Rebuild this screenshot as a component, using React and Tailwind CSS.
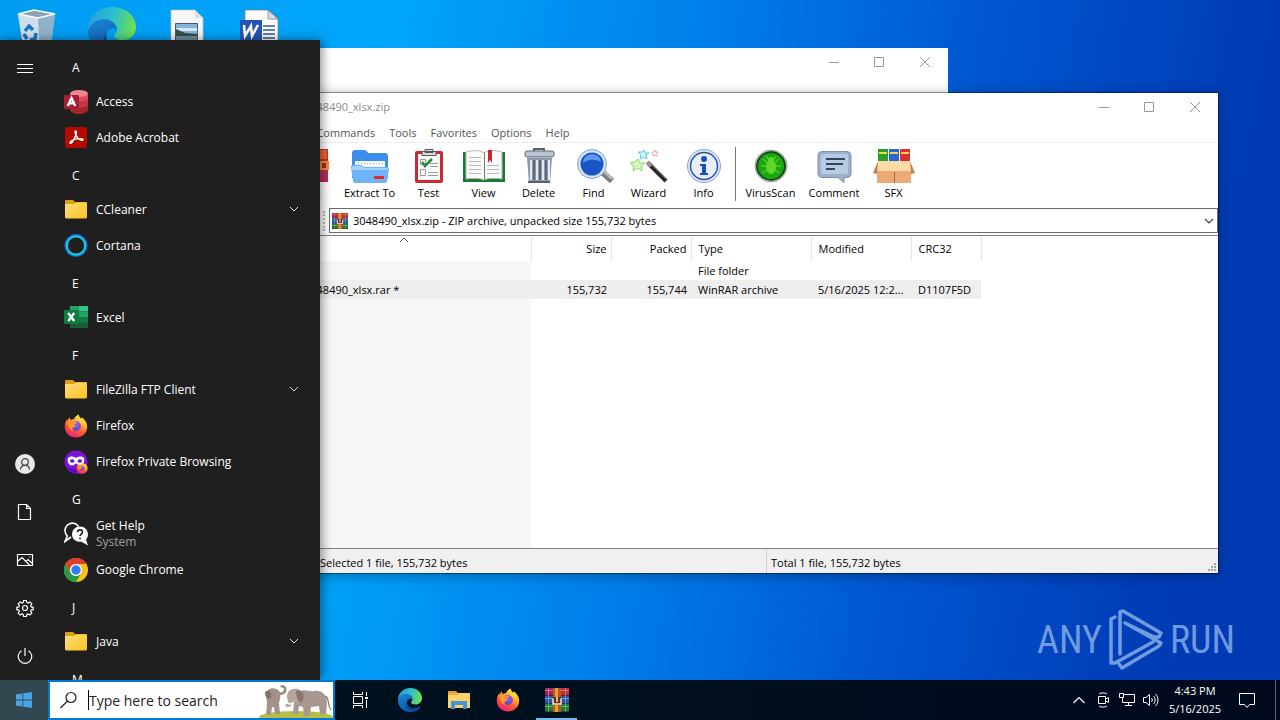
import { useId } from 'react'

const startRows = [
  { header: 'A' },
  { label: 'Access', icon: 'access' },
  { label: 'Adobe Acrobat', icon: 'acrobat' },
  { header: 'C' },
  { label: 'CCleaner', icon: 'folder', expandable: true },
  { label: 'Cortana', icon: 'cortana' },
  { header: 'E' },
  { label: 'Excel', icon: 'excel' },
  { header: 'F' },
  { label: 'FileZilla FTP Client', icon: 'folder', expandable: true },
  { label: 'Firefox', icon: 'firefox' },
  { label: 'Firefox Private Browsing', icon: 'private' },
  { header: 'G' },
  { label: 'Get Help', icon: 'help', note: 'System' },
  { label: 'Google Chrome', icon: 'chrome' },
  { header: 'J' },
  { label: 'Java', icon: 'folder', expandable: true },
  { header: 'M' },
]

const FirefoxIcon = ({ className }) => {
  const id = useId()
  return (
    <svg className={className} viewBox="0 0 24 24" aria-hidden="true">
      <defs>
        <linearGradient id={`${id}a`} x1="0.8" y1="0" x2="0.3" y2="1">
          <stop offset="0" stopColor="#fff44f" />
          <stop offset="0.35" stopColor="#ffb02e" />
          <stop offset="0.65" stopColor="#ff5634" />
          <stop offset="1" stopColor="#e8207c" />
        </linearGradient>
        <radialGradient id={`${id}b`} cx="0.6" cy="0.3" r="0.8">
          <stop offset="0" stopColor="#a55cf0" />
          <stop offset="1" stopColor="#4d3fc4" />
        </radialGradient>
      </defs>
      <path
        fill={`url(#${id}a)`}
        d="M14.6 .4c.2 2.2 1.3 3.3 2.6 4.4.5-.4.5-1 .4-1.6 3 2 5.6 5.400 5.600 9.600C23.200 19 18.200 23.600 12 23.600S.8 19 .8 12.800c0-3 .8-5.200 2-7.300l.5 1.600c.5-1.700 1.500-3 2.600-3.900-.1 1.200.2 2 .8 2.700 1-.5 2.300-.7 3.300-.5C10.400 3.200 12.200 1.500 14.600.4Z"
      />
      <circle cx="11.800" cy="12" r="5" fill={`url(#${id}b)`} />
      <path fill="#ff9a2a" d="M3.600 8.200c2.700-2.300 5-2 6.800-.6l2.700.3c-.1 1.400-2.300 1.600-3 2.600.5.900 1.400 1 2.300 1.500-1.400 1-2.900.7-3.600 1.700-.6 1-.2 2.400.7 3.200-3.500-.7-6-4.500-5.900-8.700Z" />
      <path fill="#ffd43a" d="M14.600.4c.2 2.200 1.300 3.300 2.600 4.400 2.500 2 3.300 5 2.500 8.200-.5-2.300-1.500-3.900-3.700-5C13.400 6.700 12.600 3 14.600.4Z" />
    </svg>
  )
}

const EdgeIcon = ({ className }) => {
  const id = useId()
  return (
    <svg className={className} viewBox="0 0 48 48" aria-hidden="true">
      <defs>
        <linearGradient id={`${id}a`} x1="0" y1="0.3" x2="1" y2="0.5">
          <stop offset="0" stopColor="#2a9fd8" />
          <stop offset="0.5" stopColor="#2cc0ce" />
          <stop offset="1" stopColor="#6fe04a" />
        </linearGradient>
        <linearGradient id={`${id}b`} x1="0" y1="0" x2="0.5" y2="1">
          <stop offset="0" stopColor="#1b86d4" />
          <stop offset="1" stopColor="#0b57b0" />
        </linearGradient>
      </defs>
      <path fill={`url(#${id}b)`} d="M0 24C2 15 9 12 16 12c8 0 13 6 13 11-3-3-8-2-10 2-3 7 2 15 11 16 5 .5 9-1 12-3 2-1 3 0 2 2-4 5-11 8-20 8C10 48 0 38 0 24Z" />
      <path fill={`url(#${id}a)`} d="M0 24C0 10 11 0 24 0c14 0 24 9 24 20 0 8-6 13-13 13-6 0-9-2-9-4s3-3 3-7c0-5-6-10-13-10C8 12 2 17 0 24Z" />
      <path fill="#094a9c" d="M19 25c-3 7 2 15 11 16 5 .5 9-1 12-3 2-1 3 0 2 2-4 5-10 7-18 6-10-1-13-14-7-21Z" />
    </svg>
  )
}

const WinRarIcon = ({ className }) => (
  <svg className={className} viewBox="0 0 24 24" aria-hidden="true">
    <path fill="#a3205f" d="M0 0h12v8H0z" />
    <path fill="#c22a3e" d="M12 0h12v8H12z" />
    <path fill="#2458b8" d="M0 8h24v8H0z" />
    <path fill="#14803c" d="M0 16h24v8H0z" />
    <path fill="#dd6a94" d="M0 2h24v1H0z" />
    <path fill="#6c9fe6" d="M0 10h24v1H0z" />
    <path fill="#52bd70" d="M0 18h24v1H0z" />
    <path fill="#2b1b3a" d="M0 7h24v1H0zM0 15h24v1H0zM0 23h24v1H0z" opacity=".7" />
    <path fill="#d8b04a" d="M3 0h1v24H3zM20 0h1v24h-1z" opacity=".6" />
    <path fill="#b85c14" d="M8 0h8v24H8z" />
    <path fill="#ee9a3c" d="M10 0h3v24h-3z" />
    <path fill="#6b2c14" d="M8 9h8v8H8z" />
    <path fill="none" stroke="#f6e6cc" strokeWidth="1.500" d="M8 10.500v5.500h8v-5.500M12 9v5" />
  </svg>
)

const FolderIcon = ({ className }) => {
  const id = useId()
  return (
    <svg className={className} viewBox="0 0 24 24" aria-hidden="true">
      <linearGradient id={id} x1="0" y1="0" x2="1" y2="1">
        <stop offset="0" stopColor="#ffe07a" />
        <stop offset="1" stopColor="#fcbf22" />
      </linearGradient>
      <path fill="#dfa010" d="M1 3a1 1 0 0 1 1-1h7l2 2h11a1 1 0 0 1 1 1v4H1Z" />
      <path fill={`url(#${id})`} d="M1 6h9l2-1.500h10a1 1 0 0 1 1 1V19a1.500 1.500 0 0 1-1.500 1.500h-19A1.500 1.500 0 0 1 1 19Z" />
    </svg>
  )
}

function AppIcon({ name }) {
  const className = 'h-6 w-6 shrink-0'

  if (name === 'folder') return <FolderIcon className={className} />
  if (name === 'firefox') return <FirefoxIcon className={className} />

  if (name === 'private') {
    return (
      <div className="relative h-6 w-6 shrink-0">
        <svg className="h-6 w-6" viewBox="0 0 24 24" aria-hidden="true">
          <circle cx="12" cy="12" r="11.500" fill="#7a12d8" />
          <path fill="#5a0cc0" d="M12 23.500A11.500 11.500 0 0 1 2 17c4 2 10 3 14 0Z" />
          <path fill="#fff" d="M4 8c1.500-2 5.500-2 8 0 2.500-2 6.500-2 8 0 1 4-1 7.500-4 7.500-2.500 0-3-2-4-2s-1.500 2-4 2C5 15.500 3 12 4 8Z" />
          <ellipse cx="8.200" cy="11" rx="2.300" ry="1.700" fill="#6a10cc" />
          <ellipse cx="15.800" cy="11" rx="2.300" ry="1.700" fill="#6a10cc" />
        </svg>
        <FirefoxIcon className="absolute right-0 bottom-0 h-3 w-3" />
      </div>
    )
  }

  return (
    <svg className={className} viewBox="0 0 24 24" aria-hidden="true">
      {name === 'access' && (
        <>
          <path fill="#a4262c" d="M6 3v17c0 2 4 4 9 4s9-2 9-4V3Z" />
          <path fill="#c8354a" d="M6 3v11c0 2 4 3.500 9 3.500s9-1.500 9-3.500V3Z" />
          <path fill="#dd4a5e" d="M6 3v5c0 2 4 3.500 9 3.500S24 10 24 8V3Z" />
          <ellipse cx="15" cy="3.500" rx="9" ry="3.500" fill="#ef8593" />
          <rect y="5" width="15" height="14" rx="1" fill="#a51d36" />
          <path fill="none" stroke="#fff" strokeWidth="2.300" d="M3.700 16 7.500 8 11.300 16M5.200 13.300h4.600" />
        </>
      )}
      {name === 'acrobat' && (
        <>
          <rect x="1" y="1" width="22" height="21" rx="3" fill="#b30b00" />
          <path fill="none" stroke="#fff" strokeWidth="1.400" d="M11.500 5c-1.400 1 1.700 9 6.300 9.300 2.200.1 1.700-1.800-1.300-1.700-3.600.1-8.500 1.400-10.200 3.300-1 1.300.5 2.100 1.800.4 2.200-2.900 4.700-8.500 4.300-10.600-.1-.7-.6-.9-.9-.7Z" />
        </>
      )}
      {name === 'cortana' && (
        <>
          <circle cx="12" cy="11.500" r="10.500" fill="none" stroke="#0a6fc2" strokeWidth="2" />
          <circle cx="12" cy="11.500" r="9.200" fill="none" stroke="#22bfe8" strokeWidth="2.200" />
        </>
      )}
      {name === 'excel' && (
        <>
          <path fill="#21a366" d="M6 0h9v5.500H6z" />
          <path fill="#33c481" d="M15 0h9v5.500h-9z" />
          <path fill="#107c41" d="M6 5.500h9V11H6z" />
          <path fill="#21a366" d="M15 5.500h9V11h-9z" />
          <path fill="#185c37" d="M6 11h18v11H6z" />
          <path fill="#107c41" d="M15 11h9v5.500h-9z" />
          <rect y="4" width="15" height="14" rx="1" fill="#107c41" />
          <path fill="none" stroke="#fff" strokeWidth="2.300" d="m4.200 7 6 8M10.200 7l-6 8" />
        </>
      )}
      {name === 'help' && (
        <>
          <path fill="none" stroke="#fff" strokeWidth="1.600" d="M7 15 1 19.500 3.300 14C.4 11 .2 6.500 3 3.500 6.500 0 12 .5 14.500 4.500" />
          <path fill="#fff" d="M16 4.500c4.400 0 8 3.400 8 7.700 0 2.300-.8 4-2 5.300l2 6-6.500-3.800C12 20.300 8 17 8 12.200c0-4.300 3.600-7.700 8-7.700Z" />
          <path fill="none" stroke="#1f1f1f" strokeWidth="1.600" d="M13.500 10.300c.2-3.300 5-3 5-.2 0 1.900-2.500 2-2.500 4M16 15.500v1.800" />
        </>
      )}
      {name === 'chrome' && (
        <>
          <circle cx="12" cy="12" r="12" fill="#fbc116" />
          <path fill="#e33b2e" d="M1.600 6A12 12 0 0 1 22.400 6H12a6 6 0 0 0-5.200 9Z" />
          <path fill="#229a48" d="M1.600 6A12 12 0 0 0 12 24l5.200-9a6 6 0 0 1-10.400 0Z" />
          <circle cx="12" cy="12" r="6" fill="#fff" />
          <circle cx="12" cy="12" r="4.700" fill="#2f7df0" />
        </>
      )}
    </svg>
  )
}

// Thin line icons of the left rail
const railIcons = [
  {
    label: 'Account',
    drawing: (
      <>
        <circle cx="10" cy="10" r="10" fill="#e8e8e8" stroke="none" />
        <g stroke="#444">
          <circle cx="10" cy="8" r="3.300" />
          <path d="M5.500 15.500c0-5.500 9-5.500 9 0" />
        </g>
      </>
    ),
  },
  { label: 'Documents', drawing: <path d="M3.500 2.500h8l4 4v11h-12zM11.500 2.500v4h4" /> },
  { label: 'Pictures', drawing: <path d="M2.500 4.500h15v11h-15zM2.500 11.500l4.500-4 8 8M11 11.500l2-2 4.500 4M14 7h1" /> },
  {
    label: 'Settings',
    drawing: (
      <>
        <circle cx="10" cy="10" r="2.500" />
        <path d="m8.600 2.500-.4 2-1.300.5-1.700-1.100-2 2 1.100 1.700-.5 1.300-2 .4v2.400l2 .4.5 1.300-1.100 1.700 2 2 1.700-1.100 1.300.5.4 2h2.800l.4-2 1.300-.5 1.700 1.100 2-2-1.100-1.700.5-1.300 2-.4V9.300l-2-.4-.5-1.300 1.100-1.700-2-2-1.700 1.100-1.300-.5-.4-2Z" />
      </>
    ),
  },
  { label: 'Power', drawing: <path d="M10 2v8M6.500 4.700a6.800 6.800 0 1 0 7 0" /> },
]

function StartMenu() {
  return (
    <nav aria-label="Start" className="absolute top-10 bottom-0 left-0 z-20 flex w-80 overflow-hidden bg-[#1f1f1f] text-white shadow-[2px_0_10px_rgba(0,0,0,0.45)]">
      <div className="flex w-12 shrink-0 flex-col pt-1">
        <button aria-label="Expand" className="flex h-12 items-center justify-center pl-0.5">
          <svg className="h-4 w-4" viewBox="0 0 16 16" stroke="#fff">
            <path d="M0 4.500h16M0 8.500h16M0 12.500h16" />
          </svg>
        </button>
        <div className="mt-auto flex flex-col">
          {railIcons.map(({ label, drawing }) => (
            <button aria-label={label} className="flex h-12 items-center justify-center pl-0.5" key={label}>
              <svg className="h-5 w-5" viewBox="0 0 20 20" fill="none" stroke="#fff" strokeWidth="1.200">
                {drawing}
              </svg>
            </button>
          ))}
        </div>
      </div>

      <ul className="flex-1 overflow-hidden pt-2">
        {startRows.map((row) =>
          row.header ? (
            <li className="h-9 pt-1 pl-6 text-[12px] leading-8" key={row.header}>
              {row.header}
            </li>
          ) : (
            <li key={row.label}>
              <button className="flex h-9 w-full items-center gap-2 pr-5 pl-4 text-left">
                <AppIcon name={row.icon} />
                <span className="flex flex-1 flex-col text-[12px] leading-4">
                  {row.label}
                  {row.note ? <span className="text-[#a0a0a0]">{row.note}</span> : null}
                </span>
                {row.expandable ? (
                  <svg className="h-3 w-3" viewBox="0 0 12 12" fill="none" stroke="#ddd">
                    <path d="m2 3 4 4 4-4" />
                  </svg>
                ) : null}
              </button>
            </li>
          ),
        )}
      </ul>
    </nav>
  )
}

const WindowControls = () => (
  <div className="flex">
    <button aria-label="Minimize" className="flex h-7 w-[45px] items-center justify-center">
      <svg className="h-3 w-3" viewBox="0 0 12 12" stroke="#999"><path d="M1 6.500h10" /></svg>
    </button>
    <button aria-label="Maximize" className="flex h-7 w-[45px] items-center justify-center">
      <svg className="h-3 w-3" viewBox="0 0 12 12" fill="none" stroke="#999"><path d="M1.500 1.500h9v9h-9z" /></svg>
    </button>
    <button aria-label="Close" className="flex h-7 w-[47px] items-center justify-center">
      <svg className="h-3 w-3" viewBox="0 0 12 12" stroke="#999"><path d="m1 1 10 10M11 1 1 11" /></svg>
    </button>
  </div>
)

// Toolbar drawings share a 44x38 box
const tools = [
  {
    label: 'Add',
    width: 'w-[55px]',
    drawing: (
      <>
        <path fill="#c7331d" d="M4 2h35v33H4z" />
        <path fill="#f0633a" d="M27 3h11v9H27z" />
        <path fill="#b92c5e" d="M4 24h35v11H4z" />
        <path fill="#f08b4a" d="M30 14h10v9H30z" />
        <path fill="#a82c12" d="M33 16h4v5h-4z" />
      </>
    ),
  },
  {
    label: 'Extract To',
    width: 'w-[63px]',
    drawing: (
      <>
        <path fill="#3c8ee8" d="M4 7c0-3 1-4 3-4h9c2 0 3 1 4 3h17c2 0 3 1 3 3v22H4Z" />
        <path fill="#f5f9ff" d="M7 14h30v8H7z" />
        <path stroke="#8aa9c8" strokeDasharray="1 2" d="M10 16.500h25" />
        <path fill="#6db3f8" d="M3 20c0-1 1-2 2-2h8l3 2h23c1 0 2 1 2 2l-2 12c0 1-1 2-2 2H7c-1 0-2-1-2-2Z" />
        <path fill="#a5d2fc" d="M4 20c0-1 1-1 2-1h7l3 2h23c1 0 1 1 1 2H4Z" />
        <path fill="#e02c22" d="M26 29h10v3H26z" />
      </>
    ),
  },
  {
    label: 'Test',
    width: 'w-[55px]',
    drawing: (
      <>
        <rect x="8" y="4" width="28" height="32" rx="2" fill="#c62b33" />
        <path fill="#fafafa" d="M11 7h22v26H11z" />
        <path fill="#d8dde0" stroke="#555" d="M15 4.500h14v4H15zM18 2.500h8v3h-8z" />
        <path fill="none" stroke="#999" d="M13.500 12.500h5v5h-5zM13.500 22.500h5v6h-5zM23 16.500h8M23 19.500h8M21 25.500h10M21 28.500h10" />
        <path fill="none" stroke="#248a35" strokeWidth="2.500" d="m15 15 3 4 7-7" />
      </>
    ),
  },
  {
    label: 'View',
    width: 'w-[55px]',
    drawing: (
      <>
        <path fill="#187a33" d="M1 5h42v30H1z" />
        <path fill="#fafafa" stroke="#b7b7b7" d="M4 5c7-2 14-2 18 1 4-3 11-3 18-1v27c-7-1-14-1-18 1-4-2-11-2-18-1Z" />
        <path stroke="#777" d="M22.500 6v27" />
        <path stroke="#b5b9b5" d="M7 10.500h12M7 14.500h12M7 18.500h12M7 22.500h12M7 26.500h12M25 18.500h12M25 22.500h12M25 26.500h12" />
        <path fill="#c9242b" d="M26 3h4v13l-2-3-2 3z" />
      </>
    ),
  },
  {
    label: 'Delete',
    width: 'w-[55px]',
    drawing: (
      <>
        <path fill="none" stroke="#59616c" strokeWidth="2" d="M17 4V2h10v2" />
        <path fill="#8e9bac" d="M10 11h25l-2 25H12z" />
        <path stroke="#e3eaf2" strokeWidth="2" d="M14 13v20M20 13v20M26 13v20M32 13v20" />
        <path stroke="#5d6979" strokeWidth="2" d="M17 13v20M23 13v20M29 13v20" />
        <rect x="8" y="4" width="29" height="6" rx="2" fill="#b8c4d0" stroke="#5c6673" />
        <path stroke="#59616c" strokeWidth="2" d="M11 35h22" />
      </>
    ),
  },
  {
    label: 'Find',
    width: 'w-[55px]',
    drawing: (
      <>
        <path stroke="#777b82" strokeWidth="6" d="m30 25 10 9" />
        <path stroke="#c2c6cc" strokeWidth="2" d="m31 24 9 8" />
        <circle cx="20" cy="17" r="14.500" fill="#d5e2f2" stroke="#8aa3c5" />
        <circle cx="20" cy="17" r="11.500" fill="#1955c4" />
        <path fill="#5f99ef" d="M11 16c0-11 17-12 18-1-5-3-13-3-18 1Z" />
      </>
    ),
  },
  {
    label: 'Wizard',
    width: 'w-[55px]',
    drawing: (
      <>
        <path stroke="#262626" strokeWidth="4" d="m21 16 18 18" />
        <path stroke="#999" strokeWidth="4" d="m20 15 4 4" />
        <path stroke="#777" d="m22 15 17 17" />
        <path fill="#d4f8c0" stroke="#8ad966" d="m11 12 2 4 5 0-4 3 1 5-4-3-5 3 1-5-4-3 5-1Z" />
        <path fill="#d5f5fc" stroke="#62c9e6" d="m17 3 1 3 4 0-3 2 1 4-3-2-4 2 1-4-3-3 4 0Z" />
        <path fill="#fff" stroke="#f08a80" strokeWidth=".8" d="m28 3 1 2 2 0-1 2 0 2-2-1-2 1 0-2-1-2 2 0Z" />
      </>
    ),
  },
  {
    label: 'Info',
    width: 'w-[55px]',
    drawing: (
      <>
        <circle cx="22" cy="19" r="16.500" fill="#dce6f2" stroke="#93a6c4" />
        <circle cx="22" cy="19" r="13.500" fill="#e9eff8" stroke="#2b54b8" strokeWidth="1.500" />
        <circle cx="22" cy="12" r="3" fill="#1b4fc0" />
        <path fill="#1b4fc0" d="M18 17h6v9h2v2h-8v-2h2v-7h-2z" />
      </>
    ),
    divider: true,
  },
  {
    label: 'VirusScan',
    width: 'w-[63px]',
    drawing: (
      <>
        <circle cx="22" cy="19" r="16" fill="#e4e8e4" stroke="#999" />
        <circle cx="22" cy="19" r="14" fill="#19a812" stroke="#174a18" strokeWidth="2" />
        <path stroke="#6fe03a" d="m14 12 16 14M30 12 14 26M12 19h20M17 9l3 4M27 9l-3 4" />
        <ellipse cx="22" cy="20" rx="5" ry="7" fill="#5fd628" />
        <circle cx="22" cy="13" r="3" fill="#5fd628" />
      </>
    ),
  },
  {
    label: 'Comment',
    width: 'w-16',
    drawing: (
      <>
        <path fill="#9db1ca" stroke="#7d91ad" d="M10 4.500h25a4 4 0 0 1 4 4v18a4 4 0 0 1-4 4h-3v5l-6-5H10a4 4 0 0 1-4-4v-18a4 4 0 0 1 4-4Z" />
        <rect x="9" y="7" width="27" height="20" rx="2" fill="#b9cbe2" />
        <path stroke="#35455e" strokeWidth="2" d="M14 12h19M14 17h17M14 22h9" />
      </>
    ),
  },
  {
    label: 'SFX',
    width: 'w-[55px]',
    drawing: (
      <>
        <path fill="#27a02c" d="M6 2h10v14H6z" />
        <path fill="#2668d0" d="M17 2h10v14H17z" />
        <path fill="#dc2f2f" d="M28 2h10v14H28z" />
        <path stroke="#f2d64a" strokeWidth="2" d="M7 6h8M18 6h8M29 6h8" />
        <path fill="#edaa78" d="M5 19h34v17H5z" />
        <path fill="#fbdca4" d="M6 14h32l2 10H4z" />
        <path fill="#c78154" d="m6 14-5 12 4 1zM38 14l5 12-4 1z" />
        <path stroke="#a86840" d="M22.500 25v11" />
      </>
    ),
  },
]

const columns = [
  { label: 'Name', width: 'w-[253px]', sorted: true },
  { label: 'Size', width: 'w-20', right: true },
  { label: 'Packed', width: 'w-20', right: true },
  { label: 'Type', width: 'w-[120px]' },
  { label: 'Modified', width: 'w-[100px]' },
  { label: 'CRC32', width: 'w-[70px]' },
]

const rows = [
  { cells: ['..', '', '', 'File folder', '', ''] },
  { cells: ['3048490_xlsx.rar *', '155,732', '155,744', 'WinRAR archive', '5/16/2025 12:2...', 'D1107F5D'], selected: true },
]

function FileTable() {
  return (
    <table className="h-full w-[703px] table-fixed border-collapse text-left">
      <thead>
        <tr className="h-[25px]">
          {columns.map(({ label, width, right, sorted }) => (
            <th className={`relative border-r border-[#e5e5e5] pl-[7px] font-normal ${width} ${right ? 'pr-1 text-right' : ''}`} key={label}>
              {label}
              {sorted ? (
                <svg className="absolute top-0 right-[123px] h-2 w-2" viewBox="0 0 8 8" fill="none" stroke="#555">
                  <path d="m0 6 4-4 4 4" />
                </svg>
              ) : null}
            </th>
          ))}
        </tr>
      </thead>
      <tbody>
        {rows.map(({ cells, selected }) => (
          <tr className={`h-[19px] ${selected ? 'bg-[#eeeeee]' : ''}`} key={cells[0]}>
            {cells.map((cell, i) => (
              <td
                className={`py-0 pr-1 whitespace-nowrap ${i === 0 ? 'pl-[26px]' : 'pl-[7px]'} ${i === 0 && !selected ? 'bg-[#f7f7f7]' : ''} ${columns[i].right ? 'text-right' : ''}`}
                key={columns[i].label}
              >
                {cell}
              </td>
            ))}
          </tr>
        ))}
        <tr>
          <td className="bg-[#f7f7f7]" />
          <td colSpan={5} />
        </tr>
      </tbody>
    </table>
  )
}

function ArchiveWindow() {
  return (
    <section
      aria-label="3048490_xlsx.zip"
      className="absolute top-[92px] left-[277px] z-10 flex h-[482px] w-[942px] flex-col border border-black/40 bg-white bg-clip-padding text-[11px] leading-4 shadow-[0_2px_12px_rgba(0,0,0,0.3)]"
    >
      <header className="flex h-[30px] items-start justify-between text-[#8c8c8c]">
        <div className="flex items-center gap-1.5 pt-1.5 pl-1">
          <WinRarIcon className="h-4 w-4" />
          3048490_xlsx.zip
        </div>
        <WindowControls />
      </header>
      <div className="flex h-5 items-center border-b border-[#eeeeee] text-[#555]">
        {['File', 'Commands', 'Tools', 'Favorites', 'Options', 'Help'].map((item) => (
          <button className="px-[7px]" key={item}>
            {item}
          </button>
        ))}
      </div>

      <div className="flex h-[62px] items-center pl-[5px]">
        {tools.map(({ label, width, drawing, divider }) => (
          <div className="flex items-center" key={label}>
            <button className={`flex flex-col items-center whitespace-nowrap ${width}`}>
              <svg className="h-[38px] w-11" viewBox="0 0 44 38">
                {drawing}
              </svg>
              {label}
            </button>
            {divider ? <span className="mr-[3px] ml-1 h-[54px] w-px bg-[#777]" /> : null}
          </div>
        ))}
      </div>

      <div className="mt-[3px] flex h-[25px]">
        <div className="flex w-[51px] items-center justify-end pr-1">
          <span className="h-5 border-l-2 border-dotted border-[#bbb]" />
        </div>
        <label className="flex flex-1 items-center gap-[5px] border border-[#6b6b6b] pr-0.5 pl-0.5">
          <WinRarIcon className="h-4 w-4" />
          <select aria-label="Path" className="h-full flex-1 appearance-none outline-none">
            <option>3048490_xlsx.zip - ZIP archive, unpacked size 155,732 bytes</option>
          </select>
          <svg className="h-3 w-3" viewBox="0 0 12 12" fill="none" stroke="#444" strokeWidth="1.200">
            <path d="m2 4 4 4 4-4" />
          </svg>
        </label>
      </div>

      <div className="mt-0.5 min-h-0 flex-1 border-t border-b border-[#828282]">
        <FileTable />
      </div>

      <footer className="flex h-6 items-center bg-[#f0f0f0]">
        <div className="h-full flex-1 border-r border-[#cfcfcf] pt-1.5 pl-[42px]">Selected 1 file, 155,732 bytes</div>
        <div className="flex h-full w-[451px] items-end justify-between pl-1">
          <span className="h-full pt-1.5">Total 1 file, 155,732 bytes</span>
          <svg className="h-3 w-3" viewBox="0 0 12 12" fill="#a0a0a0">
            <path d="M8 2h2v2H8zM8 5h2v2H8zM8 8h2v2H8zM5 5h2v2H5zM5 8h2v2H5zM2 8h2v2H2z" />
          </svg>
        </div>
      </footer>
    </section>
  )
}

function DesktopIcons() {
  return (
    <div className="flex gap-px pt-[7px]">
      <div className="flex w-[74px] justify-center">
        <svg className="h-12 w-12" viewBox="0 0 48 48" aria-label="Recycle Bin">
          <path fill="#b4cfe0" d="m5 7 16-4 21 4-5 38H11Z" />
          <path fill="#cfe0ec" d="m5 7 20 4 2 36-16-3Z" />
          <path fill="#8fb2cb" d="m25 11 17-4-5 37-10 3Z" />
          <path fill="#8aa4b5" stroke="#f8fbfd" strokeWidth="1.500" d="m5 7 16-4 21 4-17 4Z" />
          <path fill="none" stroke="#1678c8" strokeWidth="3.500" d="m12 24 4-5 4 4M23 26l-1 6-5 1M14 32l-3-5" />
        </svg>
      </div>
      <div className="flex w-[74px] justify-center">
        <EdgeIcon className="h-12 w-12" />
      </div>
      <div className="flex w-[74px] justify-center">
        <svg className="h-12 w-12" viewBox="0 0 48 48" aria-label="Picture file">
          <path fill="#f6f6f6" stroke="#b8c2ca" strokeWidth=".7" d="M8 3h24l8 8v36H8Z" />
          <path fill="#d9e0e5" d="M32 3v8h8Z" />
          <path fill="#80b5dc" stroke="#555" d="M12.500 16.500h22v17h-22z" />
          <path fill="#d8eaf5" d="M13 21h21v3H13z" />
          <path fill="#335248" d="m13 22 9 4 12 1v2H13z" />
          <path fill="#6c8fa4" d="M13 29h21v4H13z" />
        </svg>
      </div>
      <div className="flex w-[74px] justify-center">
        <svg className="h-12 w-12" viewBox="0 0 48 48" aria-label="Word document">
          <path fill="#fdfdfd" stroke="#7b7b7b" strokeWidth=".7" d="M7 3h23l10 9v35H7Z" />
          <path fill="#ddd" stroke="#777" strokeWidth=".7" d="M30 3v9h10Z" />
          <path stroke="#2b579a" strokeWidth="1.500" d="M25 19h12M25 23h12M25 27h12M25 31h12" />
          <path fill="#2455b4" d="M2 13h22v22H2z" />
          <path fill="none" stroke="#fff" strokeWidth="2.500" d="m6 18 1 11 6-10 1 10 6-11" />
        </svg>
      </div>
    </div>
  )
}

function Watermark() {
  return (
    <div className="absolute right-[45px] bottom-2 flex items-center gap-1.5 font-['Liberation_Sans_Narrow','Roboto_Condensed','Roboto',sans-serif] text-[38px] leading-none text-[#8db4ea]/80">
      ANY
      <svg className="h-16 w-14" viewBox="0 0 56 64" fill="none" stroke="#8db4ea" strokeWidth="3.500" strokeLinejoin="round" strokeLinecap="round" strokeOpacity=".8">
        <path d="M12 46V4l3-1 38 22-2 4h-5L17 15M7 9 3 11v44h4l38-21M17 15l36 20-2 3-37 22-3-4" />
      </svg>
      RUN
    </div>
  )
}

const Elephants = () => (
  <svg className="h-[34px] w-[74px] self-end" viewBox="0 0 74 34" aria-hidden="true">
    <ellipse cx="37" cy="33" rx="37" ry="6" fill="#b8bd45" />
    <path fill="none" stroke="#9a8880" strokeWidth="2.500" d="M18 9c6 2 9-1 8-5-1-2-3-2-4-1" />
    <path fill="#a3918a" d="M7 10c1-5 6-7 10-5 4 1 5 5 4 10l-1 4 1 11h-5l-1-7h-2l-1 8H7l1-12Z" />
    <path fill="#857069" d="M6 8c4-3 7 0 6 5-2 4-6 1-6-5Z" />
    <path fill="#a8978f" d="M40 8c5-4 10 0 15-1 8-1 13 4 13 11l-1 12h-6l-1-8-8 1-1 9h-6l-1-9-4-1-1 8h-5l1-12Z" />
    <path fill="#b7a69d" d="M28 12c0-6 6-8 11-7 5 2 6 7 4 11-3 5-8 4-9 1-1 4-3 7-6 6-3-2-1-4 0-3 2-1 0-4 0-8Z" />
    <path fill="#8a766e" d="M37 7c6-2 9 3 7 9-2 5-7 1-7-9Z" />
    <path fill="none" stroke="#8a766e" strokeWidth="1.200" d="M67 12c4 4 1 9 5 14" />
    <path fill="none" stroke="#fff" strokeWidth="1.500" d="M28 18c2 3 4 2 5 1" />
  </svg>
)

function Taskbar() {
  return (
    <footer className="relative z-30 flex h-10 shrink-0 items-stretch bg-linear-to-r from-[#021520] to-[#00091c] text-white">
      <button aria-label="Start" className="flex w-12 items-center justify-center bg-[#334750]">
        <svg className="h-4 w-4" viewBox="0 0 16 16" fill="#4aa3e6">
          <path d="M0 2.300 6.500 1.400v6.200H0zM7.300 1.300 16 0v7.600H7.300zM0 8.400h6.500v6.200L0 13.700zM7.300 8.400H16V16l-8.700-1.300z" />
        </svg>
      </button>
      <div className="flex w-[287px] items-center border-2 border-[#0078d7] bg-white pl-2.5 text-black">
        <svg className="h-[18px] w-[18px]" viewBox="0 0 18 18" fill="none" stroke="#222" strokeWidth="1.200">
          <circle cx="11" cy="6.500" r="5" />
          <path d="m7.500 10-7 7" />
        </svg>
        <span className="ml-2.5 h-5 w-px bg-black" />
        <input
          aria-label="Search"
          className="min-w-0 flex-1 text-[14px] outline-none placeholder:text-[#222]"
          placeholder="Type here to search"
        />
        <Elephants />
      </div>
      <button aria-label="Task View" className="flex w-[50px] items-center justify-center">
        <svg className="h-4 w-4" viewBox="0 0 16 16" fill="none" stroke="#fff">
          <path d="M1.500 0v2.500h9V0M1.500 4.500h9v7h-9zM1.500 16v-2.500h9V16M14.500 0v4M14.500 8v8" />
          <path fill="#fff" stroke="none" d="M13 5h3v2h-3z" />
        </svg>
      </button>
      <button aria-label="Edge" className="flex w-[49px] items-center justify-center">
        <EdgeIcon className="h-6 w-6" />
      </button>
      <button aria-label="File Explorer" className="flex w-[49px] items-center justify-center">
        <svg className="h-6 w-6" viewBox="0 0 24 24">
          <path fill="#e0a22c" d="M1 3h8l2 2H1z" />
          <path fill="#fcd367" d="M1 5h22v15H1z" />
          <path fill="#e9b23f" d="M1 5h10v2H1z" />
          <path fill="#4096d8" d="M4 13h16v8h-4v-4H8v4H4z" />
        </svg>
      </button>
      <button aria-label="Firefox" className="flex w-[49px] items-center justify-center">
        <FirefoxIcon className="h-6 w-6" />
      </button>
      <button aria-label="WinRAR" className="relative flex w-[49px] items-center justify-center">
        <WinRarIcon className="h-6 w-6" />
        <span className="absolute inset-x-1 bottom-0 h-0.5 bg-[#76b9ed]" />
      </button>

      <div className="ml-auto flex items-stretch text-[11px]">
        <button aria-label="Show hidden icons" className="flex w-6 items-center justify-center">
          <svg className="h-3 w-3" viewBox="0 0 12 12" fill="none" stroke="#fff" strokeWidth="1.200"><path d="m.5 9 5.500-5.500L11.500 9" /></svg>
        </button>
        <button aria-label="Meet Now" className="flex w-6 items-center justify-center">
          <svg className="h-4 w-4" viewBox="0 0 16 16" fill="none" stroke="#fff">
            <path d="M3.500 4.500h7v7h-7zM10.500 7l3-1.500v5l-3-1.500M4 2c2-1.500 6-1.500 8 0M4 14c2 1.500 6 1.500 8 0" />
          </svg>
        </button>
        <button aria-label="Network" className="flex w-6 items-center justify-center">
          <svg className="h-4 w-4" viewBox="0 0 16 16" fill="none" stroke="#fff">
            <path d="M5 2.500h10.500v8H3.500V6M.5 1.500h4v4h-4zM9.500 10.500v3M6 13.500h7" />
          </svg>
        </button>
        <button aria-label="Volume" className="flex w-6 items-center justify-center">
          <svg className="h-4 w-4" viewBox="0 0 16 16" fill="none" stroke="#fff">
            <path d="M.5 5.500h2.500l3.500-3v11l-3.500-3H.5zM8.500 6c1 1 1 3 0 4M10.500 4c2.200 2 2.200 6 0 8M12.500 2c3.300 3 3.300 9 0 12" />
          </svg>
        </button>
        <button className="flex w-16 flex-col justify-center text-center leading-[18px] whitespace-nowrap">
          <span>4:43 PM</span>
          <span>5/16/2025</span>
        </button>
        <button aria-label="Notifications" className="flex w-10 items-center justify-center">
          <svg className="h-[18px] w-[18px]" viewBox="0 0 18 18" fill="none" stroke="#fff">
            <path d="M1.500 2.500h15v11h-5L9 16.500l-2.500-3h-5z" />
          </svg>
        </button>
        <span className="ml-2 w-[5px] border-l border-[#5a6473]" />
      </div>
    </footer>
  )
}

export default function App() {
  return (
    <div className="flex h-screen flex-col overflow-hidden bg-[#0078e0] font-['Open_Sans','Noto_Sans',sans-serif]">
      <main className="relative min-h-0 flex-1 bg-[linear-gradient(100deg,#009cf2_0%,#00a6fb_28%,#0080ea_50%,#0054cf_72%,#003cb6_90%,#003ab4_100%)]">
        <DesktopIcons />
        <section aria-label="Window" className="absolute top-12 left-[258px] flex h-[300px] w-[690px] items-start justify-end bg-white">
          <WindowControls />
        </section>
        <ArchiveWindow />
        <Watermark />
        <StartMenu />
      </main>
      <Taskbar />
    </div>
  )
}
